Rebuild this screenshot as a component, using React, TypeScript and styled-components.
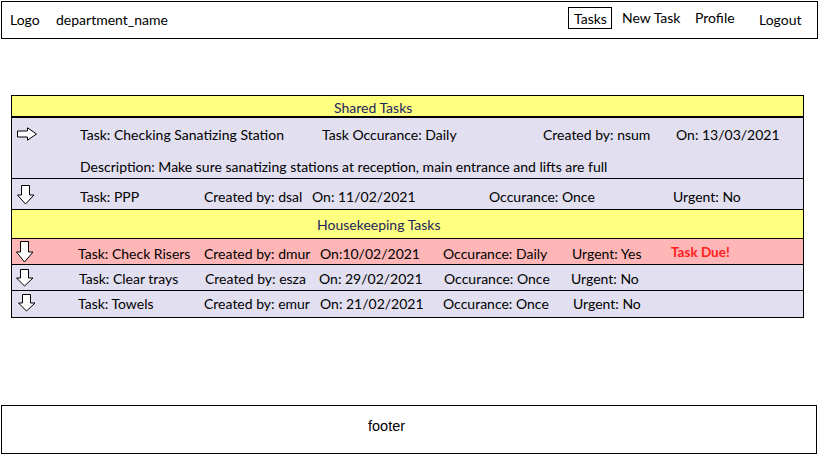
import React from "react";
import styled, { createGlobalStyle } from "styled-components";

const Global = createGlobalStyle`
  html, body { margin: 0; padding: 0; background: #fff; }
  body {
    font-family: Lato, "Open Sans", "Liberation Sans", sans-serif;
    font-size: 14px;
    color: #000;
  }
  * { box-sizing: border-box; }
`;

const Page = styled.div`
  width: 819px;
  height: 460px;
  padding: 1px 0 0 1px;
  display: flex;
  flex-direction: column;
`;

const Header = styled.header`
  width: 817px;
  height: 38px;
  border: 1px solid #000;
  padding-bottom: 2px;
  display: flex;
  align-items: center;
`;

const Brand = styled.div`
  display: flex;
  align-items: center;
  padding-left: 8px;
  flex: 1;
`;

const BrandItem = styled.span<{ $w?: number }>`
  width: ${(p) => (p.$w ? `${p.$w}px` : "auto")};
  white-space: nowrap;
`;

const Nav = styled.nav`
  display: flex;
  align-items: center;
`;

const NavItem = styled.a<{ $w: number; $active?: boolean; $dy?: number }>`
  width: ${(p) => p.$w}px;
  height: ${(p) => (p.$active ? "22px" : "auto")};
  margin-right: ${(p) => (p.$active ? "10px" : "0")};
  padding-left: ${(p) => (p.$active ? "5px" : "0")};
  border: ${(p) => (p.$active ? "1px solid #000" : "none")};
  display: flex;
  align-items: center;
  white-space: nowrap;
  color: #000;
  text-decoration: none;
  position: relative;
  top: ${(p) => p.$dy ?? 0}px;
`;

const Main = styled.main`
  padding: 56px 0 0 10px;
`;

const Table = styled.section`
  width: 793px;
  border: 1px solid #000;
  display: flex;
  flex-direction: column;
`;

const SectionHead = styled.div<{ $h: number; $pl: number; $thick?: boolean }>`
  height: ${(p) => p.$h}px;
  background: #ffff80;
  border-bottom: ${(p) => (p.$thick ? 2 : 1)}px solid #000;
  padding-left: ${(p) => p.$pl}px;
  display: flex;
  align-items: ${(p) => (p.$thick ? "flex-end" : "center")};
  color: #1d2560;
  white-space: nowrap;
`;

const TaskRow = styled.div<{ $h: number; $tone: "plain" | "due"; $last?: boolean }>`
  height: ${(p) => p.$h}px;
  background: ${(p) => (p.$tone === "due" ? "#ffb6b6" : "#e1dff0")};
  border-bottom: ${(p) => (p.$last ? "none" : "1px solid #000")};
  display: flex;
  flex-direction: column;
  justify-content: center;
`;

const DetailRow = styled(TaskRow)`
  justify-content: flex-start;
  padding-top: 7px;
  gap: 14px;
`;

const Line = styled.div<{ $dy?: number }>`
  display: flex;
  align-items: center;
  height: 18px;
  position: relative;
  top: ${(p) => p.$dy ?? 0}px;
`;

const IconCell = styled.div<{ $w: number; $pl: number; $dy?: number }>`
  width: ${(p) => p.$w}px;
  padding-left: ${(p) => p.$pl}px;
  display: flex;
  align-items: center;
  flex-shrink: 0;
  position: relative;
  top: ${(p) => p.$dy ?? 0}px;
`;

const Cell = styled.span<{ $w?: number }>`
  width: ${(p) => (p.$w ? `${p.$w}px` : "auto")};
  flex-shrink: 0;
  white-space: nowrap;
`;

const Due = styled.span`
  color: #ff2020;
  font-weight: 700;
  font-size: 13.5px;
  position: relative;
  top: -2px;
  white-space: nowrap;
`;

const Footer = styled.footer`
  margin-top: 87px;
  width: 816px;
  height: 49px;
  border: 1px solid #000;
  display: flex;
  align-items: center;
  padding-left: 366px;
  font-family: "Liberation Sans", Arial, sans-serif;
  font-size: 14.5px;
  padding-bottom: 8px;
`;

const RightArrow = () => (
  <svg width="21" height="14" viewBox="0 0 21 14">
    <polygon
      points="0.5,4 10.5,4 10.5,0.8 19.5,7 10.5,13.2 10.5,10 0.5,10"
      fill="#fff"
      stroke="#000"
      strokeWidth="1"
    />
  </svg>
);

const DownArrow = ({ h = 20 }: { h?: number }) => {
  const head = Math.round(h * 0.5);
  return (
    <svg width="18" height={h + 1} viewBox={`0 0 18 ${h + 1}`}>
      <polygon
        points={`4.5,0.5 12.5,0.5 12.5,${head} 17,${head} 8.5,${h} 0.5,${head} 4.5,${head}`}
        fill="#fff"
        stroke="#000"
        strokeWidth="1"
      />
    </svg>
  );
};

type Col = [string, number?];

const SimpleRow = ({
  cols,
  h,
  tone = "plain",
  last,
  iconPl,
  iconW,
  arrowH,
  arrowDy = 0,
  dy = 0,
  due,
}: {
  cols: Col[];
  h: number;
  tone?: "plain" | "due";
  last?: boolean;
  iconPl: number;
  iconW: number;
  arrowH: number;
  arrowDy?: number;
  dy?: number;
  due?: boolean;
}) => (
  <TaskRow $h={h} $tone={tone} $last={last}>
    <Line $dy={dy}>
      <IconCell $w={iconW} $pl={iconPl} $dy={arrowDy}>
        <DownArrow h={arrowH} />
      </IconCell>
      {cols.map(([t, w], i) => (
        <Cell key={i} $w={w}>
          {t}
        </Cell>
      ))}
      {due && <Due>Task Due!</Due>}
    </Line>
  </TaskRow>
);

export default function App() {
  return (
    <>
      <Global />
      <Page>
        <Header>
          <Brand>
            <BrandItem $w={46}>Logo</BrandItem>
            <BrandItem>department_name</BrandItem>
          </Brand>
          <Nav>
            <NavItem $w={44} $active $dy={-1}>
              Tasks
            </NavItem>
            <NavItem $w={73} $dy={-2}>
              New Task
            </NavItem>
            <NavItem $w={64} $dy={-2}>
              Profile
            </NavItem>
            <NavItem $w={58}>Logout</NavItem>
          </Nav>
        </Header>

        <Main>
          <Table>
            <SectionHead $h={22} $pl={322} $thick>
              Shared Tasks
            </SectionHead>

            <DetailRow $h={61} $tone="plain">
              <Line>
                <IconCell $w={68} $pl={5}>
                  <RightArrow />
                </IconCell>
                <Cell $w={242}>Task: Checking Sanatizing Station</Cell>
                <Cell $w={221}>Task Occurance: Daily</Cell>
                <Cell $w={133}>Created by: nsum</Cell>
                <Cell>On: 13/03/2021</Cell>
              </Line>
              <Line>
                <IconCell $w={68} $pl={5} />
                <Cell>
                  Description: Make sure sanatizing stations at reception, main entrance and lifts are full
                </Cell>
              </Line>
            </DetailRow>

            <SimpleRow
              h={31}
              dy={2}
              iconW={68}
              iconPl={5}
              arrowH={19}
              arrowDy={-1}
              cols={[
                ["Task: PPP", 124],
                ["Created by: dsal", 108],
                ["On: 11/02/2021", 177],
                ["Occurance: Once", 184],
                ["Urgent: No"],
              ]}
            />

            <SectionHead $h={29} $pl={305}>
              Housekeeping Tasks
            </SectionHead>

            <SimpleRow
              h={26}
              dy={2}
              tone="due"
              iconW={66}
              iconPl={4}
              arrowH={21}
              arrowDy={-2}
              due
              cols={[
                ["Task: Check Risers", 126],
                ["Created by: dmur", 116],
                ["On:10/02/2021", 123],
                ["Occurance: Daily", 129],
                ["Urgent: Yes", 99],
              ]}
            />
            <SimpleRow
              h={26}
              dy={1}
              iconW={67}
              iconPl={4}
              arrowH={17}
              arrowDy={-1}
              cols={[
                ["Task: Clear trays", 126],
                ["Created by: esza", 114],
                ["On: 29/02/2021", 125],
                ["Occurance: Once", 127],
                ["Urgent: No"],
              ]}
            />
            <SimpleRow
              h={26}
              dy={-1}
              last
              iconW={66}
              iconPl={6}
              arrowH={17}
              cols={[
                ["Task: Towels", 126],
                ["Created by: emur", 116],
                ["On: 21/02/2021", 123],
                ["Occurance: Once", 130],
                ["Urgent: No"],
              ]}
            />
          </Table>
        </Main>

        <Footer>footer</Footer>
      </Page>
    </>
  );
}
